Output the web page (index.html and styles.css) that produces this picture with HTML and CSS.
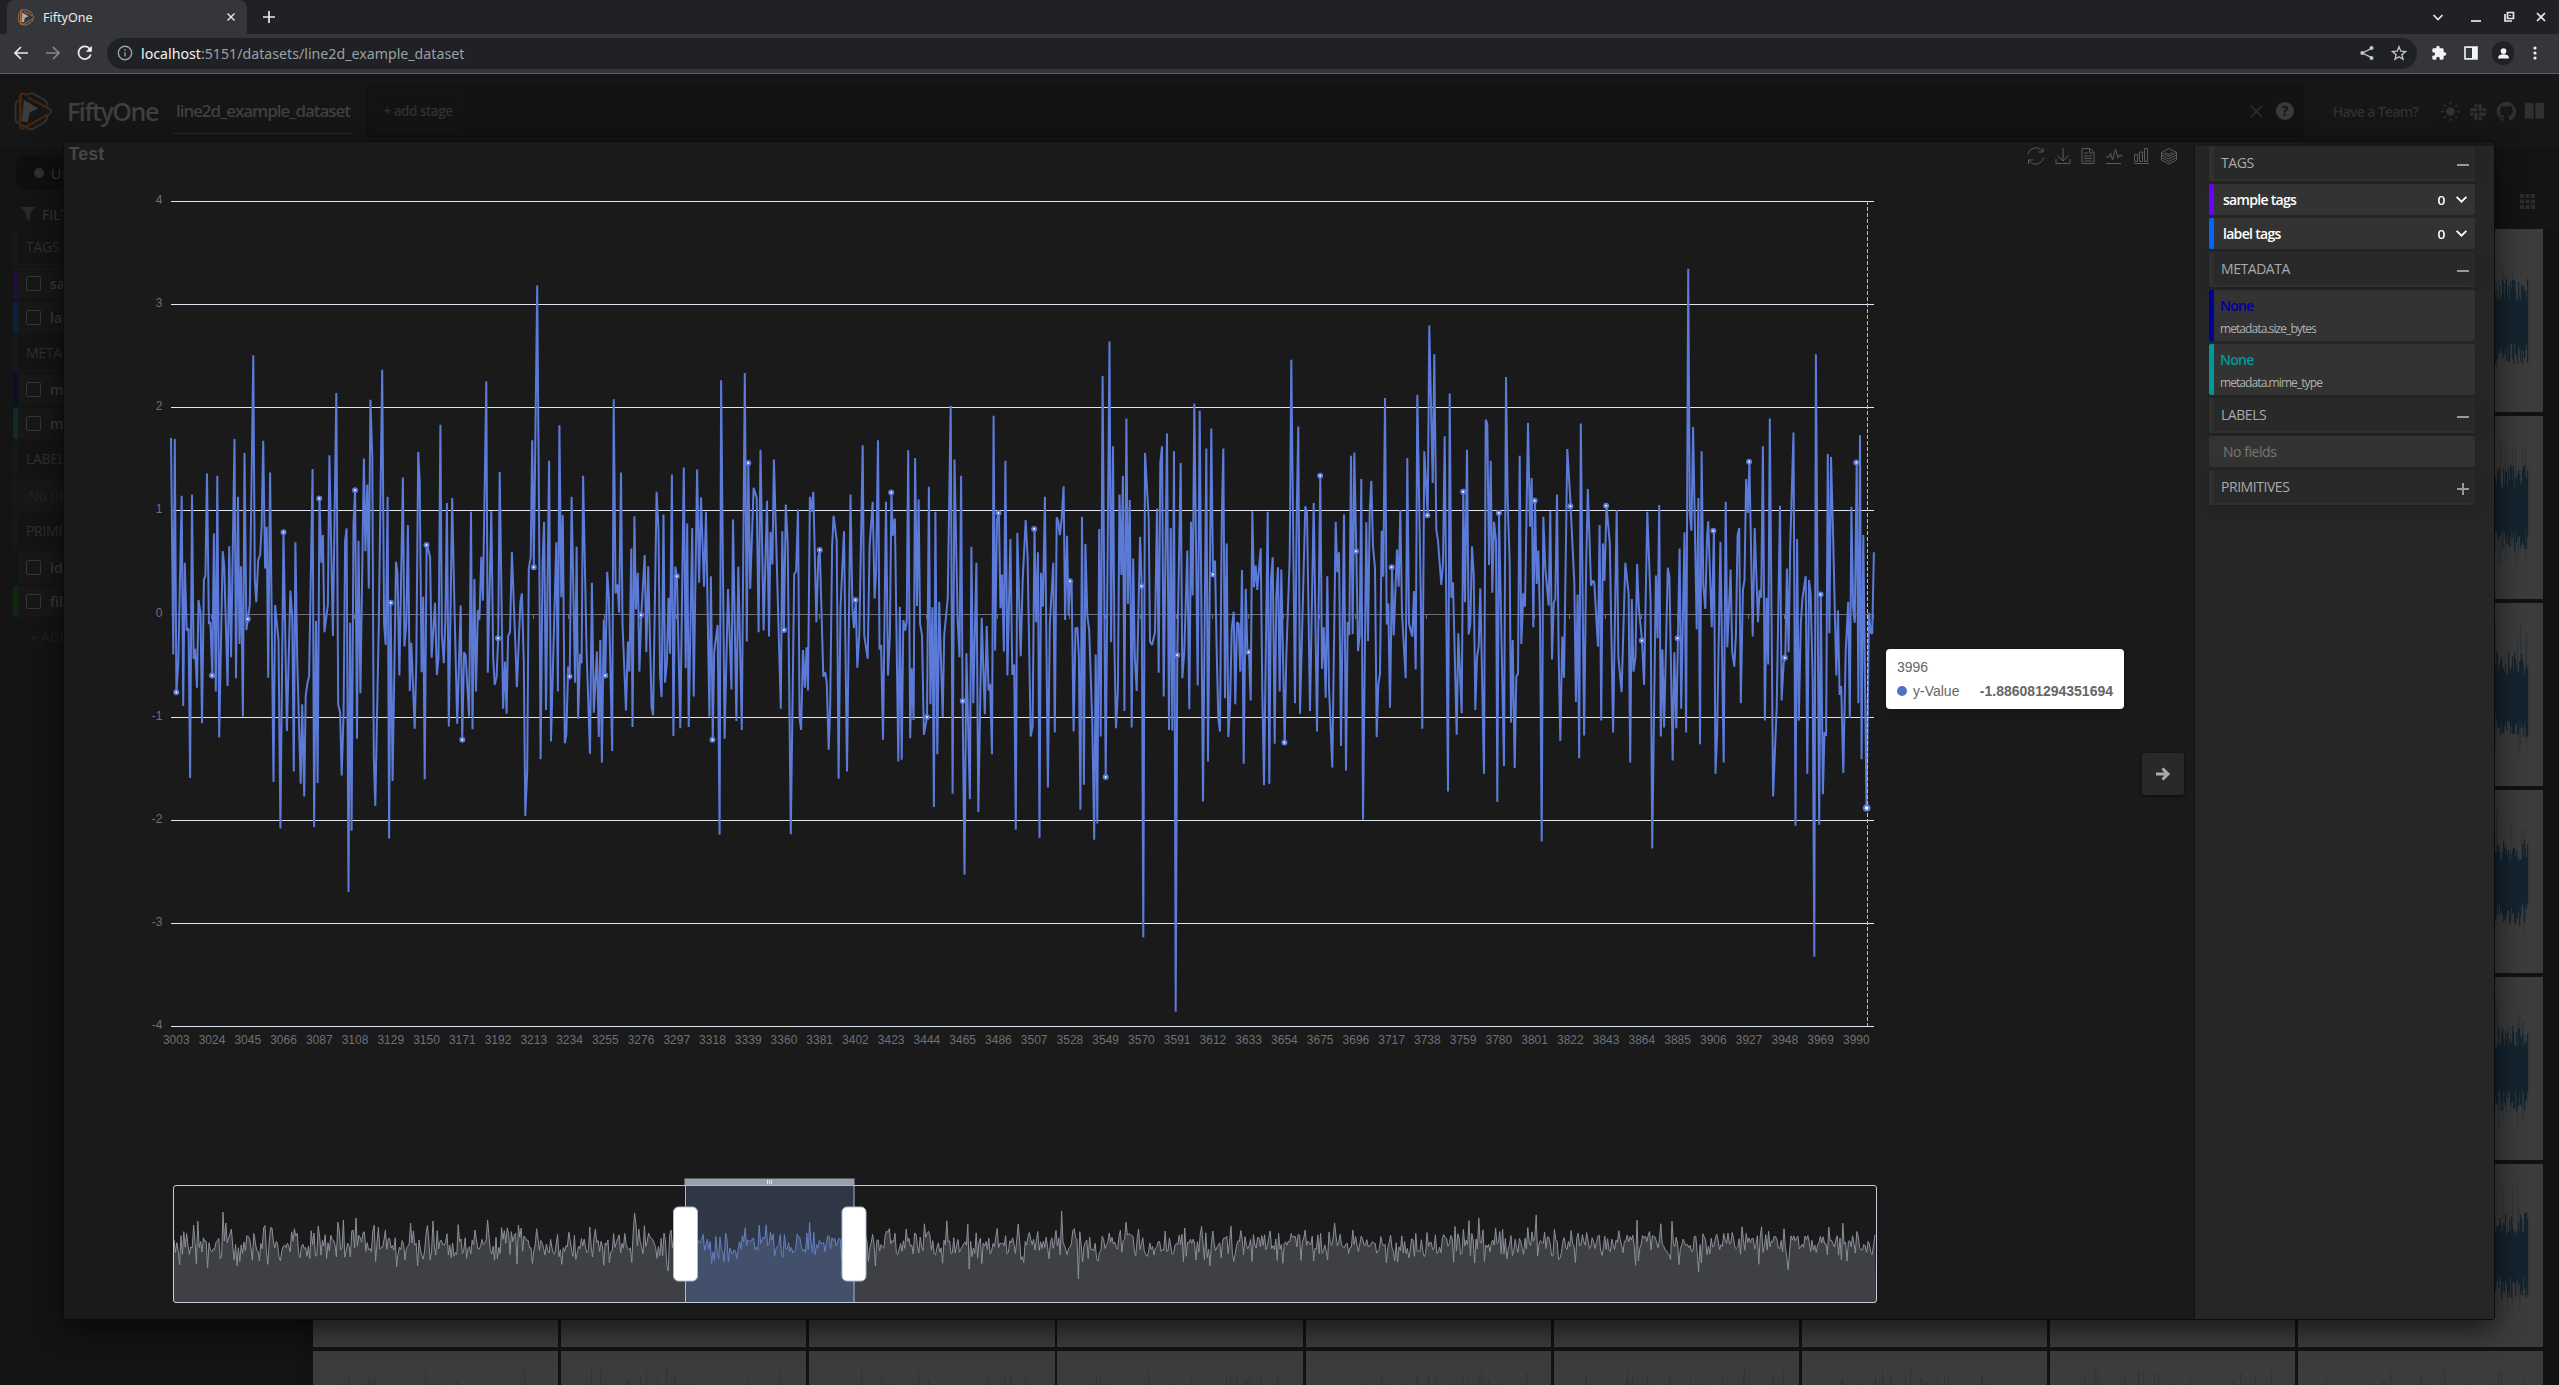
FILE: index.html
```html
<!DOCTYPE html>
<html lang="en">
<head>
<meta charset="utf-8">
<title>FiftyOne</title>
<link rel="stylesheet" href="styles.css">
</head>
<body>
<svg class="defs" width="0" height="0">
  <symbol id="logo" viewBox="0 0 40 40">
    <g fill="none" stroke-linejoin="round" stroke-linecap="round">
      <path class="lg" d="M8 7 4 9Q1.500 10.500 1.500 13V28Q1.500 31 5 32.500M8 34 14 37Q17 39.500 21 37L31 31Q34 29 34 26V24M12 3 15 2Q18 .5 21 2.500L31 8Q34 10 34 13" stroke-width="2"/>
      <path class="lf" stroke="none" d="M10 8 25 17 16 21 14 31 8 30Z"/>
      <path class="lo" d="M9 2Q6 1 6 5V34Q6 39 10 37L33 24M11 2Q7 0 7 4V30M15 6 36 17Q39 19 37 22L34 24" stroke-width="2"/>
    </g>
  </symbol>
</svg>
<header class="browser">
  <div class="tabstrip">
    <div class="tab"><svg class="favicon"><use href="#logo"/></svg><span>FiftyOne</span>
      <svg class="tab-x" viewBox="0 0 8 8"><path d="M.5.5l7 7M7.500.5l-7 7"/></svg></div>
    <svg class="newtab" viewBox="0 0 12 12"><path d="M6 0v12M0 6h12"/></svg>
    <div class="winctl">
      <svg viewBox="0 0 16 16"><path d="M3.500 6l4.500 4.500L12.500 6"/></svg>
      <svg viewBox="0 0 16 16"><path d="M3 12h10"/></svg>
      <svg viewBox="0 0 16 16"><path d="M6.500 3.500h6v6h-6zM4 5v7h7M9 6v1"/></svg>
      <svg viewBox="0 0 16 16"><path d="M4 4l8 8M12 4l-8 8"/></svg>
    </div>
  </div>
  <div class="toolbar">
    <svg class="nav" viewBox="0 0 16 16"><path d="M15 8H2M8 2L2 8l6 6"/></svg>
    <svg class="nav dim" viewBox="0 0 16 16"><path d="M1 8h13M8 2l6 6-6 6"/></svg>
    <svg class="nav" viewBox="0 0 16 16"><path d="M13.800 9.500A6.300 6.300 0 1 1 12.800 4"/><path d="M14.800.8v6h-6z" class="solid"/></svg>
    <div class="omnibox">
      <svg class="info" viewBox="0 0 16 16"><circle cx="8" cy="8" r="6.700"/><path d="M8 7.200v4.300M8 4.300v1.500"/></svg>
      <span class="url"><b>localhost</b>:5151/datasets/line2d_example_dataset</span>
      <svg class="omni share" viewBox="0 0 16 16"><path d="M12.500 3.300 3.500 8l9 4.700"/><g class="fillme"><circle cx="12.500" cy="3" r="2"/><circle cx="3.300" cy="8" r="2"/><circle cx="12.500" cy="13" r="2"/></g></svg>
      <svg class="omni" viewBox="0 0 16 16"><path d="M8 1.800l1.800 4.400 4.700.4-3.600 3.100 1.100 4.600L8 11.800l-4 2.500 1.100-4.600L1.500 6.600l4.700-.4z"/></svg>
    </div>
    <div class="ext">
      <svg viewBox="0 0 24 24"><path class="solid" d="M20.500 11H19V7c0-1.100-.9-2-2-2h-4V3.500a2.500 2.500 0 0 0-5 0V5H4c-1.100 0-2 .9-2 2v3.800h1.500a2.700 2.700 0 0 1 0 5.400H2V20c0 1.100.9 2 2 2h3.800v-1.500a2.700 2.700 0 0 1 5.400 0V22H17c1.100 0 2-.9 2-2v-4h1.500a2.500 2.500 0 0 0 0-5z"/></svg>
      <svg viewBox="0 0 16 16"><path d="M2 2.200h12v11.600H2z"/><path class="solid" d="M9 2h5v12H9z"/></svg>
      <span class="avatar"><svg viewBox="0 0 16 16"><circle class="solid" cx="8" cy="5" r="3.500"/><path class="solid" d="M1.500 14v-1.500c0-2 3-3.500 6.500-3.500s6.500 1.500 6.500 3.500V14z"/></svg></span>
      <svg viewBox="0 0 16 16"><g class="solid"><circle cx="8" cy="3" r="1.600"/><circle cx="8" cy="8" r="1.600"/><circle cx="8" cy="13" r="1.600"/></g></svg>
    </div>
  </div>
</header>

<main class="app">
  <div class="appbar">
    <svg class="applogo"><use href="#logo"/></svg>
    <h1>FiftyOne</h1>
    <div class="dataset">line2d_example_dataset</div>
    <div class="viewbar"><div class="addstage">+ add stage</div>
      <svg class="clear" viewBox="0 0 14 14"><path d="M1 1l12 12M13 1L1 13"/></svg>
      <span class="help">?</span></div>
    <div class="team">Have a Team?</div>
    <div class="links">
      <svg viewBox="0 0 24 24"><circle cx="12" cy="12" r="5"/><path class="ray" d="M12 1v3M12 20v3M1 12h3M20 12h3M4.500 4.500l2 2M17.500 17.500l2 2M19.500 4.500l-2 2M6.500 17.500l-2 2"/></svg>
      <svg viewBox="0 0 24 24"><path d="M6 15a2 2 0 1 1-2-2h2zm1 0a2 2 0 0 1 4 0v5a2 2 0 0 1-4 0zM9 7a2 2 0 1 1 2-2v2zm0 1a2 2 0 0 1 0 4H4a2 2 0 0 1 0-4zm8 2a2 2 0 1 1 2 2h-2zm-1 0a2 2 0 0 1-4 0V5a2 2 0 0 1 4 0zm-2 8a2 2 0 1 1-2 2v-2zm0-1a2 2 0 0 1 0-4h5a2 2 0 0 1 0 4z"/></svg>
      <svg viewBox="0 0 24 24"><path d="M12 .8a11.300 11.300 0 0 0-3.600 22c.6.100.8-.2.800-.5v-2c-3.200.7-3.900-1.500-3.900-1.500-.5-1.300-1.300-1.700-1.300-1.700-1-.7.100-.7.100-.7 1.200.1 1.800 1.200 1.800 1.200 1 1.800 2.700 1.300 3.300 1 .1-.8.400-1.300.7-1.600-2.500-.3-5.200-1.300-5.200-5.600 0-1.200.4-2.300 1.200-3-.1-.3-.5-1.500.1-3 0 0 1-.3 3.100 1.200a11 11 0 0 1 5.700 0c2.200-1.500 3.100-1.200 3.100-1.200.6 1.500.2 2.700.1 3 .7.800 1.200 1.800 1.200 3 0 4.300-2.700 5.300-5.200 5.600.4.400.8 1 .8 2.100v3.100c0 .3.200.7.800.5A11.300 11.300 0 0 0 12 .8z"/></svg>
      <svg viewBox="0 0 24 24"><path d="M1 2h8q2 0 2 2v17l-1-1H1zM23 2h-8q-2 0-2 2v17l1-1h9z"/></svg>
    </div>
  </div>
  <div class="body">
    <aside class="side">
      <div class="pill"><i></i>Unsaved</div>
      <div class="filter"><svg viewBox="0 0 14 14"><path d="M0 0h14L9 7v7l-4-3V7z"/></svg>FILTER</div>
      <div class="sh">TAGS</div>
      <div class="sr c1"><i></i>sample tags</div>
      <div class="sr c2"><i></i>label tags</div>
      <div class="sh">METADATA</div>
      <div class="sr c3"><i></i>metadata.size_bytes</div>
      <div class="sr c4"><i></i>metadata.mime_type</div>
      <div class="sh">LABELS</div>
      <div class="sr none">No fields</div>
      <div class="sh">PRIMITIVES</div>
      <div class="sr c5"><i></i>id</div>
      <div class="sr c6"><i></i>filepath</div>
      <div class="addgroup">+ ADD GROUP</div>
    </aside>
    <section class="samples">
      <div class="samples-bar"><svg viewBox="0 0 15 15"><path d="M0 0h4v4H0zM5.500 0h4v4h-4zM11 0h4v4h-4zM0 5.500h4v4H0zM5.500 5.500h4v4h-4zM11 5.500h4v4h-4zM0 11h4v4H0zM5.500 11h4v4h-4zM11 11h4v4h-4z"/></svg></div>
      <div class="grid" id="grid"></div>
    </section>
  </div>
</main>

<div class="modal">
  <div class="view">
    <svg id="chart" viewBox="65 142 2129 1176">
      <text class="title" x="68.500" y="160">Test</text>
      <g class="tools">
        <path d="M2028 154.500a8 8 0 0 1 14.500-3M2043.500 157.500a8 8 0 0 1-14.500 3M2043 148v4h-4.500M2028.500 164v-4h4.500"/>
        <path d="M2063 148v13M2057.500 155.500l5.500 5.500 5.500-5.500M2056 159v4.500h14V159"/>
        <path d="M2082 148.500h8l4 4v11h-12zM2089.500 148.500v4.500h4.500M2084 153h4M2084 156h8M2084 158.500h8M2084 161h8"/>
        <path d="M2106 157h3l1.500-4 2 7 3-11 2.500 9 1.500-3h1.500l1 2M2106 163.500h15"/>
        <path d="M2134.500 154.500h3v7h-3zM2139.500 152h3v9.500h-3zM2144.500 148.500h3v13h-3zM2134 163.500h15"/>
        <path d="M2161.500 152.500l7.500-4 7.500 4-7.500 4zM2161.500 152.500v7.500l7.500 4 7.500-4v-7.500M2161.500 155l7.500 4 7.500-4M2161.500 157.500l7.500 4 7.500-4M2165 152.500l4 2 4-2"/>
      </g>
    </svg>
    <div class="tooltip"><div>3996</div><div class="tt"><i></i><span>y-Value</span><b>-1.886081294351694</b></div></div>
    <div class="next"><svg viewBox="0 0 16 16"><path d="M1 8h12M7.500 2.500L13 8l-5.500 5.500"/></svg></div>
  </div>
  <aside class="panel">
    <div class="group">TAGS<i class="minus"></i></div>
    <div class="row p1">sample tags<span>0</span><svg viewBox="0 0 12 8"><path d="M1.500 1.500L6 6l4.500-4.500"/></svg></div>
    <div class="row p2">label tags<span>0</span><svg viewBox="0 0 12 8"><path d="M1.500 1.500L6 6l4.500-4.500"/></svg></div>
    <div class="group">METADATA<i class="minus"></i></div>
    <div class="field p3"><b>None</b><small>metadata.size_bytes</small></div>
    <div class="field p4"><b>None</b><small>metadata.mime_type</small></div>
    <div class="group">LABELS<i class="minus"></i></div>
    <div class="row empty">No fields</div>
    <div class="group">PRIMITIVES<i class="minus plus"></i></div>
  </aside>
</div>
<script src="chart.js"></script>
</body>
</html>
```
FILE: styles.css
```css
* { box-sizing: border-box; }
html { height: 1385px; overflow: hidden; }
body { margin: 0; width: 2559px; height: 1385px; overflow: hidden; background: #151515; font-family: "Open Sans", "Noto Sans", sans-serif; position: relative; }
svg { display: block; flex: none; }
.defs { position: absolute; }
.lg { stroke: #888; } .lf { fill: #aaa; } .lo { stroke: #d4691e; }

.browser { height: 74px; background: #35363a; border-bottom: 1px solid #5c5d61; font-family: "Noto Sans", sans-serif; }
.tabstrip { height: 34px; background: #202124; display: flex; align-items: center; padding-left: 7px; }
.tab { width: 240px; height: 34px; background: #35363a; border-radius: 8px 8px 0 0; display: flex; align-items: center; padding: 0 12px 0 11px; font-size: 12.500px; color: #e8eaed; }
.favicon { width: 17px; height: 17px; margin-right: 8px; }
.tab-x { width: 8px; height: 8px; margin-left: auto; }
.newtab { width: 12px; height: 12px; margin-left: 16px; }
.browser path, .browser circle { fill: none; stroke: #e8eaed; stroke-width: 1.700; }
.favicon path { stroke-width: 2; }
.browser .solid, .browser .solid circle { fill: #f1f3f4; stroke: none; }
.tab-x path { stroke-width: 1.400; }
.winctl { margin-left: auto; display: flex; gap: 16.500px; padding-right: 10px; }
.winctl svg { width: 16px; height: 16px; }
.winctl svg:first-child { margin-right: 6px; }
.toolbar { height: 38px; display: flex; align-items: center; padding-left: 13px; }
.nav { width: 16px; height: 16px; margin-right: 16px; }
.nav.dim { opacity: .45; }
.omnibox { width: 2314px; height: 31px; margin-left: -2px; border-radius: 16px; background: #202124; display: flex; align-items: center; padding: 0 10px; }
.info { width: 16px; height: 16px; margin-right: 8px; }
.browser .info path, .browser .info circle { stroke: #9aa0a6; stroke-width: 1.400; }
.url { font-size: 14.200px; color: #9aa0a6; margin-right: auto; white-space: nowrap; }
.url b { font-weight: 400; color: #f1f3f4; }
.omni { width: 16px; height: 16px; margin-left: 16px; }
.browser .omni path { stroke: #c4c7c9; stroke-width: 1.300; }
.browser .fillme circle { fill: #c4c7c9; stroke: none; }
.ext { display: flex; align-items: center; margin-left: 14px; }
.ext svg { width: 16px; height: 16px; margin-right: 16px; }
.ext .avatar { width: 22px; height: 24px; border-radius: 12px; background: #202124; display: flex; align-items: center; justify-content: center; margin: 0 13px 0 -3px; }
.ext .avatar svg { width: 13px; height: 13px; margin: 0; }

.app { height: 1311px; color: #333; overflow: hidden; }
.appbar { height: 74px; display: flex; align-items: center; background: #161616; padding: 0 14px; }
.applogo { width: 39px; height: 39px; filter: brightness(.35); }
h1 { margin: 0 0 0 14px; width: 109px; font-size: 25px; font-weight: 600; letter-spacing: -1.450px; color: #3f3f3f; }
.dataset { width: 179px; height: 39px; margin-top: 6px; margin-left: -3px; padding: 4px 3px; border-bottom: 1px solid #43210c; font-size: 17px; font-weight: 600; letter-spacing: -1.050px; color: #3f3f3f; line-height: 24px; white-space: nowrap; }
.viewbar { width: 1937px; height: 52px; margin-left: 14px; border: 1px solid #101010; border-radius: 3px; background: #131313; display: flex; align-items: center; padding: 0 8px 0 7px; }
.addstage { width: 88px; height: 36px; margin-right: auto; border: 1px solid #171717; border-radius: 3px; text-align: center; line-height: 35px; font-size: 13.500px; letter-spacing: -.5px; font-weight: 600; color: #303030; }
.clear { width: 13px; height: 13px; margin-right: 13px; stroke: #383838; stroke-width: 1.300; }
.help { width: 18px; height: 18px; border-radius: 9px; background: #3a3a3a; color: #131313; text-align: center; font: 700 14px/18px "Open Sans"; }
.team { width: 101px; height: 28px; margin-left: 22px; border: 1px solid #1a1a1a; border-radius: 3px; text-align: center; font-size: 14px; font-weight: 600; line-height: 27px; letter-spacing: -.65px; color: #303030; }
.links { display: flex; gap: 7px; margin-left: 14px; }
.links svg { width: 21px; height: 21px; fill: #303030; }
.ray { stroke: #303030; stroke-width: 2; }
.body { display: flex; height: 1237px; }
.side { width: 298px; padding: 8px 0 0 13px; background: #141414; font-size: 14px; color: #3a3a3a; white-space: nowrap; overflow: hidden; }
.pill { height: 34px; margin-left: 3px; border-radius: 8px; background: #0f0f0f; display: flex; align-items: center; padding-left: 18px; }
.pill i { width: 10px; height: 10px; border-radius: 5px; background: #303030; margin-right: 7px; }
.filter { height: 40px; display: flex; align-items: center; padding: 8px 0 0 8px; }
.filter svg { width: 14px; height: 14px; fill: #2a2a2a; margin-right: 7px; }
.sh { height: 35px; line-height: 34px; margin-bottom: 3px; padding-left: 8px; border-left: 5px solid #171717; border-bottom: 1px solid #191919; letter-spacing: -.3px; color: #303030; }
.sr { height: 31px; line-height: 31px; margin-bottom: 3px; padding-left: 8px; border-left: 5px solid #171717; border-radius: 2px; background: #171717; display: flex; align-items: center; font-weight: 600; }
.sr i { width: 15px; height: 15px; border: 1px solid #353535; border-radius: 2px; margin-right: 9px; }
.none { padding-left: 10px; color: #232323; font-weight: 400; }
.c1 { border-color: #210b41; } .c2 { border-color: #0c2143; } .c3 { border-color: #0d0c2b; }
.c4 { border-color: #0b2c2a; } .c5 { border-color: #0b180c; } .c6 { border-color: #0b2b0c; }
.addgroup { padding: 8px 0 0 17px; color: #232323; font-size: 13.500px; }
.samples { flex: 1; padding-left: 15px; background: #121212; overflow: hidden; }
.samples-bar { height: 81px; padding: 46px 24px 0 0; display: flex; justify-content: flex-end; background: #141414; }
.samples-bar svg { width: 15px; height: 15px; fill: #2c2c2c; }
.grid { display: grid; grid-template-columns: repeat(9, 245.300px); grid-auto-rows: 183px; gap: 4px 2.850px; }
.grid svg { width: 100%; height: 183px; background: #3c3c3c; }
.grid .wave { fill: none; stroke: #14242f; stroke-width: 1.200; }
.grid .spike { fill: none; stroke: #2e3438; stroke-width: 1; }

.modal { position: absolute; left: 63px; top: 141px; width: 2432px; height: 1179px; border: 1px solid #0c0c0c; border-radius: 3px; display: flex; box-shadow: 0 8px 30px rgba(0,0,0,.65); background: #1a1a1a; }
.view { position: relative; width: 2130px; height: 1177px; padding-left: 1px; background: #1a1a1a; }
#chart { width: 2129px; height: 1176px; font-family: "Liberation Sans", Arial, sans-serif; }
#chart text { font-size: 12px; fill: #6e7079; }
#chart .title { font-size: 18px; font-weight: 700; fill: #464646; }
.tools { fill: none; stroke: #5b5b5b; stroke-width: 1; }
.tooltip { position: absolute; left: 1822px; top: 507px; width: 238px; height: 60px; border-radius: 4px; background: #fff; box-shadow: 1px 2px 10px rgba(0,0,0,.2); padding: 11px; font: 14px/14px "Liberation Sans", Arial, sans-serif; color: #666; }
.tt { display: flex; align-items: center; margin-top: 10px; }
.tt i { width: 10px; height: 10px; border-radius: 5px; background: #5470c6; margin-right: 6px; }
.tt b { margin-left: auto; }
.next { position: absolute; left: 2078px; top: 611px; width: 42px; height: 42px; border-radius: 3px; background: #292929; box-shadow: 0 1px 3px rgba(0,0,0,.6); display: flex; align-items: center; justify-content: center; }
.next svg { width: 16px; height: 16px; fill: none; stroke: #aaa; stroke-width: 3; }
.panel { width: 300px; border-left: 1px solid #0f0f0f; border-top: 4px solid #1a1a1a; background: #262626; padding: 0 19px 0 14px; color: #aaa; font-size: 14px; }
.group { height: 35px; margin-bottom: 3px; padding: 0 6px 0 7px; border-left: 5px solid #303030; border-bottom: 2px solid #303030; border-radius: 2px; background: #292929; box-shadow: 0 4px 16px rgba(0,0,0,.18); display: flex; align-items: center; justify-content: space-between; font-size: 14px; letter-spacing: -.45px; }
.minus { position: relative; width: 12px; height: 2px; margin-top: 4px; background: #999; }
.plus::after { content: ""; position: absolute; left: 5px; top: -5px; width: 2px; height: 12px; background: #999; }
.row { height: 31px; margin-bottom: 3px; padding: 0 7px 0 9px; border-left: 5px solid; border-radius: 2px; background: #333; display: flex; align-items: center; color: #fff; font-weight: 600; letter-spacing: -.7px; }
.row span { margin: 2px 11px 0 auto; font-size: 12px; transform: scaleX(1.150); }
.row svg { width: 13px; height: 9px; fill: none; stroke: #fff; stroke-width: 1.700; }
.row.empty { border-color: #333; color: #777; font-weight: 400; letter-spacing: -.45px; }
.field { height: 51px; margin-bottom: 3px; padding: 7px 6px; border-left: 5px solid; border-radius: 2px; background: #333; }
.field b, .field small { display: block; line-height: 18px; }
.field b { font-size: 14px; font-weight: 600; letter-spacing: -.7px; }
.field small { margin-top: 5px; font-size: 12px; letter-spacing: -.92px; color: #b0b0b0; }
.p1 { border-color: #6a00ff; } .p2 { border-color: #06f; }
.p3 { border-color: #009; } .p3 b { color: #009; }
.p4 { border-color: #099; } .p4 b { color: #099; }

.gl { stroke: #e0e6f1; stroke-width: 1; }
.axis { stroke: #6e7079; stroke-width: 1; }
.cursor { stroke: #b9bec9; stroke-width: 1; stroke-dasharray: 4 2; }
.series { fill: none; stroke: #5c7bd9; stroke-width: 2; stroke-linejoin: bevel; }
.dot { fill: #fff; stroke: #5c7bd9; stroke-width: 2; }
.zoombox { fill: none; stroke: #c6ccdd; stroke-width: 1; }
.zline { fill: none; stroke: #8b8f99; stroke-width: 1; }
.zarea { fill: #3f4044; }
.zsel { fill: #2f3746; }
.zsel-area { fill: #43506b; }
.zsel-line { fill: none; stroke: #6480c0; stroke-width: 1; }
.move { fill: #9a9fae; }
.handle { fill: #fff; stroke: #acb8d1; }
.edge { stroke: #acb8d1; }
```
FILE: chart.js
```js
// Series pieces: horizontal origin, horizontal units per pixel, points.
const pieces = [
[140, 2.6133, "81,465 87,855 91,467 95,923 100,870 109,569 113,948 117,690 122,812 127,808 131,1078 136,567 140,863 144,845 149,915 153,757 158,780 162,979 167,720 171,714 175,529 180,800 184,796 189,893 193,637 198,922 202,533 207,1005 216,669 220,695 229,912 233,660 238,860 247,467 251,898 256,571 260,836 264,696 269,967 273,492 278,811 282,791 287,765 296,316 300,720 304,761 309,685 314,675 318,620 322,470 327,700 331,625 335,897 340,527 349,1085 353,766 362,830 367,1169 375,635 384,993 393,740 398,790 402,1066 406,653 411,870 420,1088 424,945 429,1111 433,930 438,905 442,895 451,521 455,1166 460,795 464,1087 469,574 474,690 478,640 482,815 491,765 495,496 504,822 513,384 518,945 523,960 527,1073 532,960 536,650 540,628 545,1283 549,798 553,1173 558,620 562,559 567,1007 571,650 576,925 585,502 589,669 594,549 598,736 602,396 607,500 611,1040 615,1128 624,800 633,342 638,800 642,838 647,571 651,1187 655,762 660,1083 669,688 673,710 678,893 687,536 691,841 696,800 700,622 705,921 709,834 718,989 722,870 727,490 731,545 736,887 740,751 744,1080 749,658 753,665 758,680 762,861 771,762 776,892 780,860 785,441 789,820 794,871 798,790 802,582 807,985 816,573 821,750 829,980 838,767 842,1009 847,851 851,857 860,967 865,598 869,990 874,719 878,922 883,775 887,793 892,679 896,758 905,363 909,888 918,597 923,860 927,910 932,895 936,826 940,526 949,953 954,868 958,962 962,822 967,815 972,670 980,820 985,914 994,760 998,745 1003,870 1007,1146 1012,1065 1016,700 1021,680 1025,469 1029,698 1038,190 1043,620 1047,1044 1052,690 1056,616 1061,955 1069,506 1074,1012 1083,780 1088,653 1092,922 1096,442 1101,752 1105,604 1110,1015 1114,1000 1119,877 1123,895 1128,571 1137,906 1141,661 1145,971 1150,854 1154,871 1158,533 1167,850 1176,1034 1181,726 1186,960 1194,850 1199,1004 1203,829 1207,1050 1212,792 1216,893 1221,706 1225,750 1234,1029 1238,395 1243,745 1248,729 1252,780 1257,527 1261,800 1270,956 1275,832 1279,886 1284,664 1287,986 1292,606 1296,774 1301,708 1305,886 1310,784 1319,676 1323,851 1328,696 1337,950 1341,965 1350,562 1355,630 1359,890 1363,932 1368,603 1372,906 1377,870 1381,753 1385,854 1390,531 1394,1002 1399,697 1403,714 1412,988 1421,518 1426,880 1430,619 1434,986 1443,627 1447,931 1456,522 1461,726 1466,572 1474,733 1479,598 1488,967 1492,714 1497,1009"],
[640, 2.6133, "190,1009 194,850 203,802 208,1180 212,361 221,1007 230,737 239,918 243,612 252,975 257,697 266,991 274,348 279,832 283,510 288,737 297,555 305,573 310,815 315,486 323,812 332,578 337,823 341,634 346,693 350,504 359,730 368,953 372,633 376,811 381,585 386,655 394,1179 403,710 408,706 413,594 417,970 421,991 426,847 431,915 435,842 439,920 444,571 448,598 453,562 461,797 466,680 470,667 479,895 484,887 488,905 493,1027 497,950 502,660 506,605 514,650 519,1079 524,770 533,633 541,1066 550,567 555,770 559,808 564,757 568,879 573,820 582,478 586,820 595,863 600,660 608,580 613,754 617,705 622,469 626,846 630,838 635,1009 643,580 648,893 653,820 657,563 661,641 666,610 675,1048 679,769 684,1045 688,793 693,812 697,795 701,487 706,1006 710,880 715,973 719,501 724,768 728,576 732,800 737,820 742,1000 750,968 755,553 759,945 764,770 768,1130 772,598 777,1035 782,760 791,968 795,820 804,755 812,407 817,1106 822,504 830,790 835,860 839,533 843,939 848,1252 853,853 862,1116 866,661 871,943 879,690 884,1139 893,789 901,963 906,804 911,920 915,908 920,1035 924,425 928,848 933,612 938,600 942,772 946,711 951,850 955,506 960,893 968,647 973,892 978,873 982,1171 986,636 995,858 1000,720 1008,613 1013,680 1021,1003 1026,985 1031,629 1035,797 1040,671 1044,1186 1048,708 1053,769 1058,571 1066,1095 1071,800 1080,690 1084,996 1089,608 1093,615 1097,640 1102,610 1107,552 1111,793 1116,641 1120,785 1124,723 1128,725 1133,994 1138,808 1143,807 1147,860 1151,1135 1155,607 1160,1090 1164,656 1169,785 1174,812 1182,980 1187,1189 1191,855 1195,1160 1200,629 1204,1003 1209,353 1217,1076 1227,291 1231,833 1236,480 1240,850 1244,988 1249,920 1253,567 1258,712 1262,533 1266,957 1271,430 1275,764 1280,577 1285,987 1289,682 1293,860 1298,921 1307,643 1311,732"],
[1140, 3, "5,732 10,1365 15,492 26,610 30,832 36,838 45,815 51,592 56,888 61,510 66,480 71,931 81,457 87,991 92,627 97,992 102,489 107,1499 112,856 122,510 127,898 133,850 142,668 148,954 153,616 158,749 163,403 173,911 179,416 189,1120 199,484 204,1048 214,448 219,711 225,686 230,850 235,970 240,994 245,620 250,484 255,934 260,655 265,1004 270,950 275,810 281,778 286,945 291,797 296,800 301,886 306,703 311,1052 317,737 322,845 327,851 332,938 337,597 342,734 347,695 352,739 362,664 367,920 372,1091 383,598 388,1088 393,720 398,680 404,1016 409,750 414,698 419,922 424,702 434,1014 439,860 449,680 454,324 465,943 470,600 475,444 480,962 490,730 496,588 501,600 510,957 521,582 531,994 541,533 546,881 551,806 557,933 562,714 567,915 577,1059 587,616 592,707 597,671 603,1020 612,603 618,1064 623,796 628,820 633,497 638,818 643,491 649,669 654,849 659,820 664,539 669,1153 679,617 684,831 689,600 694,542 699,660 705,700 710,1004 715,910 720,890 725,632 730,715 735,393 740,801 745,763 750,951 756,698 761,821 771,666 776,733 781,595 786,780 797,898 802,501 807,800 817,823 822,741 827,882 832,387 842,740 847,989 853,489 863,604 868,262 878,546 883,314 889,630 894,650 904,730 909,690 914,462 924,1102 929,385 934,753 939,725 950,1000 955,817 965,961 970,562 975,761 981,486 986,819 991,800 996,660 1001,710 1006,955 1011,860 1016,840 1021,736 1032,1070 1037,432 1042,440 1047,694 1052,506 1057,744 1062,616 1068,650 1072,1121 1077,600 1092,1056 1098,355 1103,580 1109,690 1113,978 1118,829 1124,1060 1129,895 1134,890 1139,497 1144,836 1150,745 1155,769 1164,438 1170,625 1175,537 1180,806 1185,578 1190,728 1195,668 1200,790 1205,1192 1210,607 1216,700 1226,767 1231,596 1236,864 1241,762 1246,755 1251,567 1256,860 1261,1011 1267,823 1272,897 1282,485 1292,588"],
[1560, 2.45, "26,588 35,725 39,941 43,747 47,1042 51,439 59,1001 64,700 68,557 72,640 76,731 80,722 84,725 89,790 93,841 97,622 101,974 105,655 109,722 114,587 122,655 130,996 139,595 143,860 151,923 160,690 168,745 172,1050 176,755 180,886 185,860 189,692 193,770 201,830 206,910 214,598 222,760 226,1205 235,713 239,826 243,586 247,1003 251,846 255,987 264,699 268,715 276,1046 280,851 285,988 293,664 297,953 305,635 309,996 314,160 318,600 322,632 326,445 335,810 339,573 343,1017 347,489 351,730 356,773 360,650 363,615 368,720 372,806 377,632 381,1070 385,1000 393,652 401,1050 406,580 410,842 418,702 422,850 427,877 431,820 435,640 439,627 443,943 448,740 452,720 456,539 460,600 464,508 472,823 477,627 485,797 489,739 493,753 497,480 502,974 506,753 510,873 514,430 522,1111 531,950 539,587 543,938 548,870 552,861 556,700 560,851 564,660 572,455 577,1164 581,647 585,974 590,800 594,755 602,714 606,1070 610,721 614,745 619,900 623,1400 627,314 635,1162 639,747 644,1107 648,995 652,1002 656,494 660,817 664,499 669,640 677,893 681,776 685,928 689,912 694,1069 700,850 706,760 710,970 714,589 718,770 722,798 727,509 731,943 735,460 739,1044 743,640 751,1132 757,780 761,815 765,818 769,671"]
];
const yOf = v => 180 + v * 0.55485;
const marks = [923,893,791,635,574,559,762,658,1009,826,698,895,893,784,714,1009,510,811,667,757,563,968,939,600,629,723,1076,732,856,711,851,1014,533,669,698,604,562,600,578,588,587,830,826,632,508,861,747,509];

let seed = 7;
const rnd = () => (seed = (seed * 16807) % 2147483647) / 2147483647;
const gauss = () => rnd() + rnd() + rnd() + rnd() + rnd() + rnd() - 3;

let out = '';
for (let v = 4; v >= -4; v--) {
  const y = 201.5 + Math.round((4 - v) * 103.15);
  out += `<path class="${v ? 'gl' : 'axis'}" d="M171 ${y}H1874"/><text x="162.500" y="${y + 2.5}" text-anchor="end">${v}</text>`;
}
const xOf = k => 176.3 + 35.745 * k;
marks.forEach((m, k) => {
  out += `<path class="axis" d="M${Math.round(xOf(k) - 1) + .5} 614v5"/><text x="${xOf(k)}" y="1044" text-anchor="middle">${3003 + 21 * k}</text>`;
});
out += '<path class="axis" d="M1873.500 614v5"/>';
const pts = pieces.map(([x0, s, p]) => p.split(' ').map(q => {
  const [a, b] = q.split(',');
  return (x0 + a / s).toFixed(1) + ',' + yOf(+b).toFixed(1);
}).join(' ')).join(' ');
out += `<polyline class="series" points="${pts}"/>`;
marks.forEach((m, k) => { out += `<circle class="dot" cx="${xOf(k)}" cy="${yOf(m)}" r="2"/>`; });
out += '<path class="cursor" d="M1867.500 201V1026"/><circle class="dot" cx="1866.700" cy="808" r="2.800"/>';

// Overview slider
const fixed = { 194: 1225, 226: 1223, 344: 1220, 356: 1218, 396: 1267, 411: 1223, 417: 1266, 433: 1221, 487: 1220, 519: 1225, 634: 1213, 668: 1271, 1062: 1211, 1078: 1279, 876: 1266, 1536: 1215, 1698: 1272 };
let line = [];
for (let x = 174; x <= 1876; x += 1.4) {
  let y = 1244 + gauss() * 12.5;
  for (const f in fixed) if (Math.abs(x - f) < .71) y = fixed[f];
  line.push([+x.toFixed(1), Math.max(1211, Math.min(1279, y)).toFixed(1)]);
}
const join = a => a.map(p => p.join(',')).join(' ');
const sel = line.filter(p => p[0] >= 685 && p[0] <= 854);
out += `<polygon class="zarea" points="174,1303 ${join(line)} 1876,1303"/><polyline class="zline" points="${join(line)}"/>
<rect class="zsel" x="685" y="1185" width="169" height="118"/><polygon class="zsel-area" points="685,1303 ${join(sel)} 854,1303"/>
<polyline class="zsel-line" points="${join(sel)}"/>
<rect class="zoombox" x="173.500" y="1185.500" width="1703" height="117" rx="2.500"/>
<rect class="move" x="684.500" y="1178.500" width="170" height="7"/><path stroke="#e4e7ee" d="M767.500 1180v4M769.500 1180v4M771.500 1180v4"/>
<path class="edge" d="M685.500 1186v117M854 1186v117"/>
<rect class="handle" x="673.500" y="1207" width="24" height="74" rx="5"/><rect class="handle" x="842" y="1207" width="24" height="74" rx="5"/>`;
document.getElementById('chart').insertAdjacentHTML('beforeend', out);

// Sample thumbnails
let cells = '';
for (let i = 0; i < 63; i++) {
  let w = '', s = '';
  for (let x = 25; x < 230; x += 1) {
    const a = 20 + rnd() * 24, b = 20 + rnd() * 24;
    w += `M${x + .5} ${(92 - a).toFixed(0)}V${(92 + b).toFixed(0)}`;
    if (rnd() < .2) s += `M${x + .5} ${(60 - rnd() * 42).toFixed(0)}V${(120 + rnd() * 35).toFixed(0)}`;
  }
  cells += `<svg viewBox="0 0 245 183"><path class="spike" d="${s}"/><path class="wave" d="${w}"/></svg>`;
}
document.getElementById('grid').innerHTML = cells;
```
